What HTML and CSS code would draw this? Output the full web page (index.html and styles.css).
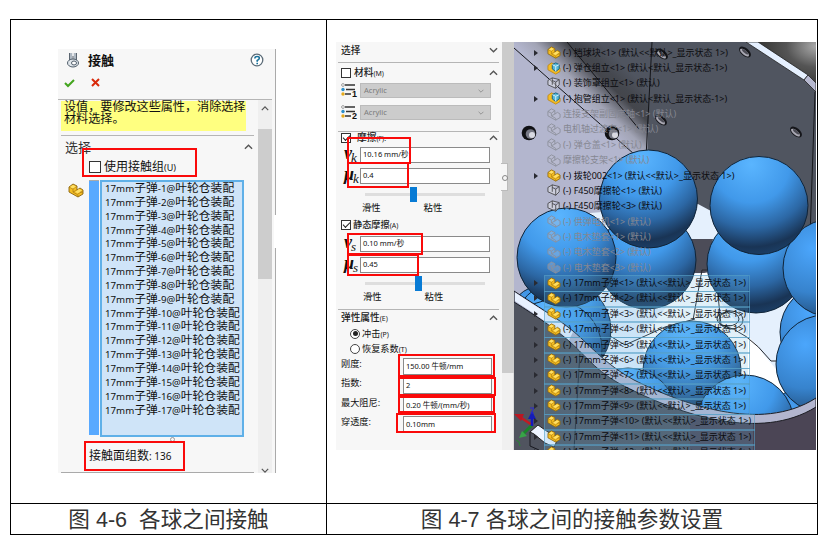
FILE: index.html
```html
<!DOCTYPE html>
<html lang="zh-CN">
<head>
<meta charset="utf-8">
<title>各球之间接触</title>
<link rel="stylesheet" href="styles.css">
</head>
<body>
<svg class="defs" width="0" height="0">
  <symbol id="part" viewBox="0 0 16 15"><path d="M1 4 5 1l4 2v4l3-2 3 2v4l-5 3-9-5z" fill="#f5bd22" stroke="#8a6410" stroke-width=".9"/><path d="M1 4l4 2v3l5 3v2M5 6l4-3M5 9l4-2 6 3M10 11l5-3" fill="none" stroke="#a87a12" stroke-width=".7"/><path d="M2 4 5 2l3 1.500L5 5.500zM7 9l4-3 3 1.500-4 2.800z" fill="#ffe066"/></symbol>
  <symbol id="asm" viewBox="0 0 16 15"><path d="M1 4 5 1l4 2v4l3-2 3 2v4l-5 3-9-5z" fill="#f5bd22" stroke="#b98414" stroke-width=".9"/><path d="m6 3 4-2 4 2v5l-4 3-4-3z" fill="#56b8d8" stroke="#125a78"/><path d="m6 3 4 2 4-2M10 5v6" fill="none" stroke="#e5f7ff"/></symbol>
  <symbol id="wire" viewBox="0 0 16 15"><path d="M1 4 6 1l8 2v6l-4 4-9-4zM6 4l4 2 4-3M10 6v7M6 1v8" fill="#e6e6ea" fill-opacity=".5" stroke="#454549"/></symbol>
  <symbol id="ghost" viewBox="0 0 16 15"><path d="M1 4 5 1l4 2v4l3-2 3 2v4l-5 3-9-5zM1 4l4 2v3l5 3v2M5 6l4-3M5 9l4-2" fill="#c2c4d0" fill-opacity=".3" stroke="#8b8e9a"/></symbol>
  <symbol id="up" viewBox="0 0 10 6"><path d="m1 5 4-4 4 4" fill="none" stroke="#555" stroke-width="1.500"/></symbol>
  <symbol id="down" viewBox="0 0 10 6"><path d="m1 1 4 4 4-4" fill="none" stroke="#555" stroke-width="1.500"/></symbol>
  <symbol id="lines" viewBox="0 0 15 15"><path d="M4 2h10M5 6.500h9M4 11h6" stroke="#333" stroke-width="1.300"/><circle cx="2" cy="2" r="1.400" fill="#fff" stroke="#777" stroke-width=".7"/><circle cx="2" cy="6.500" r="1.700" fill="#2d8fc9"/><circle cx="2" cy="11" r="1.700" fill="#e5a91a"/></symbol>
</svg>
<main class="sheet">
  <section class="cell">
    <div class="contact">
      <header class="title">
        <svg class="tool" viewBox="0 0 14 16"><path d="M5 1v7M9 1v7" stroke="#aeb8c2" stroke-width="2.500"/><path d="M3.500 1v7M10.500 1v7M7 4v4" stroke="#4b5662" stroke-width=".9"/><ellipse cx="7" cy="11" rx="5.500" ry="4" fill="#dfe5ea" stroke="#505d6a"/><ellipse cx="8" cy="11" rx="2.500" ry="2" fill="#fff" stroke="#505d6a"/></svg>
        <h1>接触</h1>
        <svg class="help" viewBox="0 0 14 14"><circle cx="7" cy="7" r="5.800" fill="#fff" stroke="#5c6c78" stroke-width="1.300"/><path d="M4.800 5.500q0-2 2.300-2t2.200 1.800Q9.300 6.500 7.200 7.500v1.200M7.200 9.700v1.500" fill="none" stroke="#16709a" stroke-width="1.600"/></svg>
      </header>
      <div class="actions">
        <svg viewBox="0 0 12 10"><path d="m1 5 3 3 6-6" fill="none" stroke="#43a51e" stroke-width="2"/></svg>
        <svg viewBox="0 0 12 10"><path d="m2 1 7 7M9 1 2 8" fill="none" stroke="#d92a0b" stroke-width="2"/></svg>
      </div>
      <div class="work">
        <div class="content">
          <p class="note">设值，要修改这些属性，消除选择<br>材料选择。</p>
          <div class="sel-head"><span>选择</span><svg class="chev"><use href="#up"/></svg></div>
          <div class="use-group"><i class="box"></i><b>使用接触组</b><span>(U)</span></div>
          <div class="pick">
            <svg class="pick-icon"><use href="#part"/></svg>
            <div class="bar"></div>
            <ul class="balls">
              <li>17mm<b>子弹</b>-1@<b>叶轮仓装配</b></li><li>17mm<b>子弹</b>-2@<b>叶轮仓装配</b></li><li>17mm<b>子弹</b>-3@<b>叶轮仓装配</b></li><li>17mm<b>子弹</b>-4@<b>叶轮仓装配</b></li><li>17mm<b>子弹</b>-5@<b>叶轮仓装配</b></li><li>17mm<b>子弹</b>-6@<b>叶轮仓装配</b></li><li>17mm<b>子弹</b>-7@<b>叶轮仓装配</b></li><li>17mm<b>子弹</b>-8@<b>叶轮仓装配</b></li><li>17mm<b>子弹</b>-9@<b>叶轮仓装配</b></li><li>17mm<b>子弹</b>-10@<b>叶轮仓装配</b></li><li>17mm<b>子弹</b>-11@<b>叶轮仓装配</b></li><li>17mm<b>子弹</b>-12@<b>叶轮仓装配</b></li><li>17mm<b>子弹</b>-13@<b>叶轮仓装配</b></li><li>17mm<b>子弹</b>-14@<b>叶轮仓装配</b></li><li>17mm<b>子弹</b>-15@<b>叶轮仓装配</b></li><li>17mm<b>子弹</b>-16@<b>叶轮仓装配</b></li><li>17mm<b>子弹</b>-17@<b>叶轮仓装配</b></li>
            </ul>
          </div>
          <i class="grip"></i>
          <div class="count"><b>接触面组数</b>: 136</div>
        </div>
        <div class="scroll"><svg><use href="#up"/></svg><i></i><svg><use href="#down"/></svg></div>
      </div>
      <i class="edge-tab"></i>
      <i class="mark m-group"></i><i class="mark m-count"></i>
    </div>
  </section>
  <section class="cell">
    <div class="figure">
      <div class="params">
        <div class="head h-sel"><span class="name">选择</span><svg class="chev"><use href="#down"/></svg></div>
        <div class="head h-mat"><i class="box"></i><span class="name">材料<small>(M)</small></span><svg class="chev"><use href="#up"/></svg></div>
        <div class="field mat"><span class="mi"><svg><use href="#lines"/></svg><sub>1</sub></span><div class="drop">Acrylic<svg><use href="#down"/></svg></div></div>
        <div class="field mat second"><span class="mi"><svg><use href="#lines"/></svg><sub>2</sub></span><div class="drop">Acrylic<svg><use href="#down"/></svg></div></div>
        <div class="head h-fric"><i class="box on"></i><span class="name">摩擦<small>(F):</small></span><svg class="chev"><use href="#up"/></svg></div>
        <div class="field"><span class="sym">v<sub>k</sub></span><div class="input">10.16 mm/秒</div></div>
        <div class="field next"><span class="sym">μ<sub>k</sub></span><div class="input">0.4</div></div>
        <div class="slider s1"><i></i></div>
        <div class="ends"><span>滑性</span><span>粘性</span></div>
        <div class="head h-static"><i class="box on"></i><span class="name">静态摩擦<small>(A)</small></span></div>
        <div class="field"><span class="sym">v<sub>s</sub></span><div class="input">0.10 mm/秒</div></div>
        <div class="field next"><span class="sym">μ<sub>s</sub></span><div class="input">0.45</div></div>
        <div class="slider s2"><i></i></div>
        <div class="ends e2"><span>滑性</span><span>粘性</span></div>
        <div class="head h-el"><span class="name">弹性属性<small>(E)</small></span><svg class="chev"><use href="#up"/></svg></div>
        <div class="radio"><i class="on"></i><span>冲击<small>(P)</small></span></div>
        <div class="radio"><i></i><span>恢复系数<small>(T)</small></span></div>
        <div class="prop"><label>刚度:</label><div class="input">150.00 牛顿/mm</div></div>
        <div class="prop"><label>指数:</label><div class="input">2</div></div>
        <div class="prop"><label>最大阻尼:</label><div class="input">0.20 牛顿/(mm/秒)</div></div>
        <div class="prop"><label>穿透度:</label><div class="input">0.10mm</div></div>
      </div>
      <div class="rail"><i class="thumb"></i><i class="tab"></i></div>
      <div class="scene">
        <svg class="model" viewBox="514 42 302 408">
          <defs>
            <radialGradient id="ball" cx=".42" cy=".08" r=".98"><stop offset="0" stop-color="#5ab5ff"/><stop offset=".4" stop-color="#4199ea"/><stop offset=".66" stop-color="#2c67a4"/><stop offset=".86" stop-color="#193455"/><stop offset="1" stop-color="#1d446f"/></radialGradient>
            <radialGradient id="lit" cx=".3" cy=".3" r=".9"><stop offset="0" stop-color="#4ba6fc"/><stop offset=".5" stop-color="#3783cd"/><stop offset="1" stop-color="#15304f"/></radialGradient>
            <linearGradient id="bend" gradientUnits="userSpaceOnUse" x1="562" y1="90" x2="604" y2="46"><stop offset="0" stop-color="#b3b6ce"/><stop offset=".25" stop-color="#a2a4b5"/><stop offset=".6" stop-color="#44464c"/><stop offset=".75" stop-color="#45484f"/><stop offset="1" stop-color="#505560"/></linearGradient>
            <radialGradient id="corner" cx="1" cy=".1" r="1"><stop offset="0" stop-color="#aaa"/><stop offset=".5" stop-color="#555"/><stop offset="1" stop-color="#353533"/></radialGradient>
            <g id="hole"><ellipse rx="7" ry="4" transform="rotate(40)" fill="#15161a"/><ellipse rx="5.500" ry="2.300" transform="rotate(40) translate(0 .8)" fill="#aaa9b4"/><ellipse rx="4" ry="1.300" transform="rotate(40) translate(0 -.3)" fill="#4c4c55"/></g>
            <g id="bore"><circle r="7.300" fill="#101114"/><circle cx="1.500" cy="1" r="4.800" fill="#777985"/><circle cx="3" cy="2" r="3" fill="#d9dae2"/></g>
          </defs>
          <path fill="#b3b6ce" d="M514 42h302v408H514z"/>
          <path fill="url(#bend)" d="M514 42h140l-6 125h-16L514 48z"/>
          <path fill="#505560" d="M652 42h164v215H643z"/>
          <path d="m514 48 120 106M567 42l72 87M652 42l-6 115" fill="none" stroke="#15161a"/>
          <path fill="url(#corner)" d="M757 42h59v42z"/>
          <path d="M746 42h12l50 33-4 5z" fill="#e5f0ff" stroke="#222" stroke-width=".8"/><path d="m804 80 4-5 8 8v9z" fill="#b6b8d0" stroke="#222" stroke-width=".8"/><path d="m815 92-5 145" stroke="#17181c"/>
          <use href="#hole" x="745" y="52"/><use href="#hole" x="796" y="132"/><use href="#hole" x="662" y="54"/><use href="#hole" x="661" y="120"/><use href="#bore" x="529" y="133"/><use href="#bore" x="612" y="133"/>
          <path fill="#e5f0fd" d="m590 213 108-9 13 7 18 25 87 20v160H620L560 290z"/>
          <path fill="#4c4c58" d="M690 239h23l-6 34h-13zM797 236l19-12v30z"/>
          <path fill="#fff" d="m640 340 52-65 18-3 10 30 30 36 30 36 10 40-120 20z"/>
          <path d="m702 270-9 50M710 270h-8M718 295l3 30q25 5 50 36h12M600 330l25 15 40-18 30-8" fill="none" stroke="#26272b"/>
          <g stroke="#102438" stroke-width="1">
            <circle cx="551" cy="332" r="49" fill="url(#lit)"/><circle cx="562" cy="330" r="49" fill="url(#ball)"/><circle cx="553" cy="349" r="49" fill="url(#ball)"/>
            <circle cx="647" cy="260" r="49" fill="url(#ball)"/><circle cx="756" cy="264" r="49" fill="url(#ball)"/><circle cx="829" cy="332" r="49" fill="url(#lit)"/><circle cx="832" cy="268" r="49" fill="url(#lit)"/>
            <circle cx="566.500" cy="257.500" r="49.500" fill="url(#ball)"/><circle cx="648.500" cy="199" r="49" fill="url(#ball)"/><circle cx="759" cy="205.500" r="49" fill="url(#ball)"/>
            <circle cx="692" cy="370" r="49" fill="url(#ball)"/><circle cx="628" cy="417" r="49" fill="url(#ball)"/><circle cx="800" cy="430" r="40" fill="url(#lit)"/><circle cx="825" cy="364" r="49" fill="url(#lit)"/><circle cx="745" cy="424" r="49" fill="url(#ball)"/>
          </g>
          <ellipse cx="731" cy="320" rx="12" ry="9" fill="none" stroke="#222"/><ellipse cx="728" cy="319" rx="11" ry="7" fill="none" stroke="#222"/>
          <path fill="#50545f" d="M514 302C538 317 554 328 570 342C588 358 598 374 630 389C680 414 766 442 816 407V450H514z"/>
          <path fill="#4b4555" d="M690 416C735 426 776 427 816 407V450H690z"/>
          <path fill="#b3b6cf" stroke="#1b1c22" d="M514 291C538 307 556 317 573 331C592 347 605 364 634 380C680 403 760 434 816 398V407C760 442 680 414 630 389C598 374 588 358 570 342C554 328 538 317 514 302z"/>
          <path fill="#e8f1ff" d="M515 292.500C538 308 556 318 573 332L569 340C554 327 538 316 515 301z"/>
          <path d="m580 352-6 98" stroke="#222631"/>
          <path d="m530 432 8-7 20 14-4 8-9-4-11-9z" fill="#edf4ff" stroke="#222"/><path d="M530 432v14l9 4" fill="none" stroke="#181920"/>
          <path d="m532 425-12-8" stroke="#c41a22" stroke-width="2.500"/><path d="m514 414 10 0-3 7z" fill="#ba1722"/><path d="m532 425-10 10" stroke="#19852a" stroke-width="3"/><path d="m519 438 3-7 5 5z" fill="#38a348"/><path d="M532 426v-9" stroke="#1518be" stroke-width="2.500"/><path d="m532 411 4 8h-8z" fill="#151cb9"/><path d="M530 408h4l-3 5h3" fill="none" stroke="#2929d0"/><path d="m516 440 3 2 1 4" fill="none" stroke="#268a31"/>
        </svg>
        <ul class="tree">
          <li><em></em><svg><use href="#part"/></svg><span>(-) 挡球块&lt;1&gt; (默认&lt;&lt;默认&gt;_显示状态 1&gt;)</span></li>
          <li><em></em><svg><use href="#asm"/></svg><span>(-) 弹仓组立&lt;1&gt; (默认&lt;默认_显示状态-1&gt;)</span></li>
          <li class="leaf"><em></em><svg><use href="#wire"/></svg><span>(-) 装饰罩组立&lt;1&gt; (默认)</span></li>
          <li><em></em><svg><use href="#asm"/></svg><span>(-) 抱管组立&lt;1&gt; (默认&lt;默认_显示状态-1&gt;)</span></li>
          <li class="leaf off"><em></em><svg><use href="#ghost"/></svg><span>连接支架副固定轴&lt;1&gt; (默认)</span></li>
          <li class="leaf off"><em></em><svg><use href="#ghost"/></svg><span>电机轴过渡套&lt;1&gt; (默认)</span></li>
          <li class="leaf off"><em></em><svg><use href="#ghost"/></svg><span>(-) 弹仓盖&lt;1&gt; (默认)</span></li>
          <li class="leaf off"><em></em><svg><use href="#ghost"/></svg><span>摩擦轮支架&lt;1&gt; (默认)</span></li>
          <li><em></em><svg><use href="#part"/></svg><span>(-) 拨轮002&lt;1&gt; (默认&lt;&lt;默认&gt;_显示状态 1&gt;)</span></li>
          <li class="leaf"><em></em><svg><use href="#wire"/></svg><span>(-) F450摩擦轮&lt;1&gt; (默认)</span></li>
          <li class="leaf"><em></em><svg><use href="#wire"/></svg><span>(-) F450摩擦轮&lt;3&gt; (默认)</span></li>
          <li class="leaf off"><em></em><svg><use href="#ghost"/></svg><span>(-) 供弹电机&lt;1&gt; (默认)</span></li>
          <li class="leaf off"><em></em><svg><use href="#ghost"/></svg><span>(-) 电木垫套&lt;1&gt; (默认)</span></li>
          <li class="leaf off"><em></em><svg><use href="#ghost"/></svg><span>(-) 电木垫套&lt;2&gt; (默认)</span></li>
          <li class="leaf off"><em></em><svg><use href="#ghost"/></svg><span>(-) 电木垫套&lt;3&gt; (默认)</span></li>
          <li class="hit"><em></em><svg><use href="#part"/></svg><span>(-) 17mm子弹&lt;1&gt; (默认&lt;&lt;默认&gt;_显示状态 1&gt;)</span></li>
          <li class="hit"><em></em><svg><use href="#part"/></svg><span>(-) 17mm子弹&lt;2&gt; (默认&lt;&lt;默认&gt;_显示状态 1&gt;)</span></li>
          <li class="hit"><em></em><svg><use href="#part"/></svg><span>(-) 17mm子弹&lt;3&gt; (默认&lt;&lt;默认&gt;_显示状态 1&gt;)</span></li>
          <li class="hit"><em></em><svg><use href="#part"/></svg><span>(-) 17mm子弹&lt;4&gt; (默认&lt;&lt;默认&gt;_显示状态 1&gt;)</span></li>
          <li class="hit"><em></em><svg><use href="#part"/></svg><span>(-) 17mm子弹&lt;5&gt; (默认&lt;&lt;默认&gt;_显示状态 1&gt;)</span></li>
          <li class="hit"><em></em><svg><use href="#part"/></svg><span>(-) 17mm子弹&lt;6&gt; (默认&lt;&lt;默认&gt;_显示状态 1&gt;)</span></li>
          <li class="hit"><em></em><svg><use href="#part"/></svg><span>(-) 17mm子弹&lt;7&gt; (默认&lt;&lt;默认&gt;_显示状态 1&gt;)</span></li>
          <li class="hit"><em></em><svg><use href="#part"/></svg><span>(-) 17mm子弹&lt;8&gt; (默认&lt;&lt;默认&gt;_显示状态 1&gt;)</span></li>
          <li class="hit"><em></em><svg><use href="#part"/></svg><span>(-) 17mm子弹&lt;9&gt; (默认&lt;&lt;默认&gt;_显示状态 1&gt;)</span></li>
          <li class="hit wide"><em></em><svg><use href="#part"/></svg><span>(-) 17mm子弹&lt;10&gt; (默认&lt;&lt;默认&gt;_显示状态 1&gt;)</span></li>
          <li class="hit wide"><em></em><svg><use href="#part"/></svg><span>(-) 17mm子弹&lt;11&gt; (默认&lt;&lt;默认&gt;_显示状态 1&gt;)</span></li>
          <li class="hit wide"><em></em><svg><use href="#part"/></svg><span>(-) 17mm子弹&lt;12&gt; (默认&lt;&lt;默认&gt;_显示状态 1&gt;)</span></li>
        </ul>
      </div>
      <i class="mark r1"></i><i class="mark r2"></i><i class="mark r3"></i><i class="mark r4"></i><i class="mark r5"></i><i class="mark r6"></i><i class="mark r7"></i><i class="mark r8"></i>
    </div>
  </section>
  <div class="caption">图 4-6&nbsp; 各球之间接触</div>
  <div class="caption">图 4-7 各球之间的接触参数设置</div>
</main>
</body>
</html>
```
FILE: styles.css
```css
* { box-sizing: border-box; }
body { margin: 0; width: 832px; height: 548px; overflow: hidden; background: #fff; color: #111; font-family: "Noto Sans", "Noto Sans CJK SC", sans-serif; }
ul, p, h1 { margin: 0; padding: 0; list-style: none; }
svg { display: block; flex: none; }
i, em, b, small { font-style: normal; font-weight: 400; }
.defs { position: absolute; }
.sheet { display: grid; grid-template-columns: 315px 490px; grid-template-rows: 483px 30px; gap: 1px; width: 808px; margin: 19px 0 0 10px; padding: 1px; background: #000; }
.cell { background: #fff; }
.caption { background: #fff; text-align: center; font: 21.6px/31px "Liberation Sans", "Noto Sans CJK SC", sans-serif; color: #333; white-space: pre; overflow: hidden; }
.mark { position: absolute; border: 2px solid #fa0a0a; }

/* contact manager */
.contact { position: relative; width: 218px; height: 424px; margin: 29px 0 0 47px; background: #f7f7f7; border-right: 1px solid #aaa; }
.title { display: flex; align-items: center; height: 22px; padding: 0 11px 0 8px; }
.tool { width: 14px; height: 16px; }
.title h1 { flex: 1; margin-left: 8px; font-size: 13px; line-height: 20px; font-weight: 700; }
.help { width: 14px; height: 14px; }
.actions { display: flex; gap: 14px; height: 29px; padding: 7px 0 0 6px; border-bottom: 1px solid #b5b5b5; width: 214px; }
.actions svg { width: 12px; height: 10px; }
.work { display: flex; height: 373px; }
.content { width: 200px; padding-left: 3px; }
.note { width: 185px; height: 30px; margin-top: 1px; background: #ffff80; padding: 0 0 0 3px; font-size: 12.1px; line-height: 12px; white-space: nowrap; }
.sel-head { display: flex; justify-content: space-between; align-items: center; height: 21px; width: 193px; margin-top: 4px; padding: 2px 1px 0 4px; border-top: 1px solid #b5b5b5; font-size: 13px; line-height: 18px; color: #333; }
.chev { width: 9px; height: 6px; }
.box { width: 10px; height: 10px; border: 1px solid #333; background: #fff; flex: none; }
.use-group { display: flex; align-items: center; height: 22px; padding-left: 28px; font-size: 9px; }
.use-group b { margin-left: 3px; font-size: 12px; line-height: 20px; }
.use-group .box { width: 12px; height: 12px; }
.pick { display: flex; height: 257px; margin-top: 2px; }
.pick-icon { width: 16px; height: 15px; margin: 3px 5px 0 7px; }
.bar { width: 10px; height: 255px; background: #58a9ff; border-top: 1px solid #aaa; margin-right: 1px; }
.balls { width: 144px; height: 257px; padding: 0 0 0 3px; border: 2px solid #5fb0e8; background: #cfe4f8; }
.balls li { height: 13.85px; font-size: 9.7px; line-height: 13.85px; white-space: nowrap; }
.balls b { font-size: 11.8px; line-height: 1; }
.grip { display: block; width: 5px; height: 5px; margin: 0 0 0 109px; border: 1px solid #999; border-radius: 50%; }
.count { height: 31px; padding-left: 28px; border-bottom: 1px solid #aaa; width: 193px; font-size: 10px; line-height: 27px; }
.count b { font-size: 12px; }
.scroll { display: flex; flex-direction: column; align-items: center; width: 14px; background: #efefef; }
.scroll svg { width: 8px; height: 5px; margin: 6px 0 18px; }
.scroll i { width: 14px; height: 150px; background: #cdcdcd; }
.scroll svg:last-child { margin: auto 0 0; }
.edge-tab { position: absolute; right: -1px; top: 166px; width: 2px; height: 33px; background: #fff; }
.m-group { left: 24px; top: 99px; width: 115px; height: 29px; }
.m-count { left: 26px; top: 392px; width: 101px; height: 30px; }

/* parameters */
.figure { position: relative; display: flex; width: 480px; height: 408px; margin: 22px 0 0 9px; overflow: hidden; }
.params { width: 166px; padding-left: 2px; background: #f7f7f7; font-size: 9.7px; line-height: 13px; }
.head { display: flex; align-items: center; width: 161px; padding: 0 1px 0 3px; }
.head .name { flex: 1; color: #222; white-space: nowrap; font-weight: 500; }
.head .box + .name { padding-left: 3px; }
small { font-size: 7px; }
.h-sel { height: 21px; padding-top: 0; padding-bottom: 4px; border-bottom: 1px solid #b5b5b5; }
.h-mat { height: 19px; }
.h-fric { height: 15px; padding-bottom: 3px; }
.head.h-fric .box + .name { padding-left: 6px; }
.h-static { height: 15px; margin: 2px 0 4px; font-size: 9.2px; }
.head.h-static .box + .name { padding-left: 2px; }
.h-el { height: 17px; border-top: 1px solid #b5b5b5; }
.box.on { position: relative; }
.box.on::after { content: ""; position: absolute; left: 1px; top: 1px; width: 6px; height: 3px; border: solid #222; border-width: 0 0 1px 1px; transform: rotate(-45deg); }
.field { display: flex; align-items: center; height: 16px; }
.field.next { margin-top: 5px; }
.mat { height: 17px; }
.mat.second { margin: 5px 0 10px; height: 17px; }
.mat.second + .head { border-top: 1px solid #b5b5b5; height: 16px; padding-bottom: 4px; }
.mi { display: flex; width: 22px; padding-left: 3px; font: 700 8px/24px "Liberation Sans", sans-serif; height: 17px; }
.mi svg { width: 15px; height: 15px; margin-top: 1px; }
.mi sub { margin-left: -4px; vertical-align: baseline; font-size: 9px; }
.drop { display: flex; justify-content: space-between; align-items: center; width: 131px; height: 15px; padding: 0 6px 0 3px; background: #ccc; border: 1px solid #bbb; color: #7b7b7b; font-size: 7.5px; }
.drop svg { width: 6px; height: 4px; opacity: .5; }
.sym { width: 22px; height: 16px; padding-left: 6px; font: italic 700 18px/13px "Liberation Serif", serif; white-space: nowrap; letter-spacing: -1px; }
.sym sub { font-size: 13px; font-weight: 400; line-height: 0; vertical-align: -3px; }
.input { width: 130px; height: 16px; padding-left: 2px; border: 1px solid #8a8a8a; background: #fff; font-size: 7.5px; line-height: 12px; white-space: nowrap; }
.slider { display: flex; align-items: center; height: 15px; width: 120px; margin: 3px 0 0 27px; background: linear-gradient(#dedede, #dedede) center / 100% 3px no-repeat; }
.slider i { width: 7px; height: 15px; margin-left: 45px; background: #087bd5; }
.s2 i { margin-left: 50px; }
.ends { display: flex; gap: 43px; height: 13px; padding-left: 24px; font-size: 9.3px; line-height: 12px; }
.e2 { height: 18px; padding-left: 25px; line-height: 11px; }
.radio { display: flex; align-items: center; height: 15px; padding-left: 12px; font-size: 9.2px; white-space: nowrap; }
.radio i { display: grid; place-items: center; width: 10px; height: 10px; margin-right: 2px; border: 1px solid #444; border-radius: 50%; background: #fff; }
.radio .on::after { content: ""; width: 5px; height: 5px; border-radius: 50%; background: #222; }
.prop { display: flex; height: 19.4px; padding-left: 3px; }
.prop label { width: 62px; font-size: 9.2px; line-height: 15px; }
.prop .input { width: 89px; height: 17px; margin-top: 2px; line-height: 15px; }
.rail { position: relative; width: 12px; background: #f0f0f0; border-right: 1px solid #ddd; }
.thumb { display: block; width: 12px; height: 331px; background: #cbcbcb; }
.tab { position: absolute; left: -1px; top: 121px; width: 7px; height: 28px; background: #f6f6f6; border: 1px solid #bbb; border-left: 0; }
.tab::after { content: ""; position: absolute; left: 1px; top: 11px; width: 4px; height: 4px; border: 1px solid #888; border-radius: 50%; }
.r1 { left: 11px; top: 95px; width: 64px; height: 27px; }
.r2 { left: 11px; top: 120px; width: 62px; height: 26px; }
.r3 { left: 11px; top: 191px; width: 76px; height: 22px; }
.r4 { left: 11px; top: 212px; width: 72px; height: 22px; }
.r5 { left: 62px; top: 312px; width: 97px; height: 23px; }
.r6 { left: 62px; top: 335px; width: 98px; height: 19px; }
.r7 { left: 62px; top: 354px; width: 97px; height: 17px; }
.r8 { left: 60px; top: 371px; width: 100px; height: 20px; }

/* model view */
.scene { position: relative; width: 302px; height: 408px; overflow: hidden; }
.model { width: 302px; height: 408px; }
.tree { position: absolute; left: 20px; top: 3px; }
.tree li { display: flex; align-items: center; width: 215px; height: 15.36px; font-size: 9px; line-height: 14px; white-space: nowrap; color: #0b0b0e; }
.tree em { width: 10px; height: 6px; flex: none; }
.tree em::before { content: ""; display: block; width: 0; border: 3px solid transparent; border-left: 4px solid #292a31; border-right: 0; }
.tree .leaf em::before { display: none; }
.tree svg { width: 14px; height: 13px; margin: 0 2px 0 3px; }
.tree .off { color: #858791; }
.tree .hit { background: linear-gradient(#66b5e033, #66b5e033) 10px 0 / 204px 100% no-repeat; position: relative; }
.tree .hit::after { content: ""; position: absolute; left: 10px; top: 0; width: 204px; height: 15px; border: 1px solid #559fc499; }
.tree .wide { background-size: 209px 100%; width: 220px; }
.tree .wide::after { width: 209px; }
```
